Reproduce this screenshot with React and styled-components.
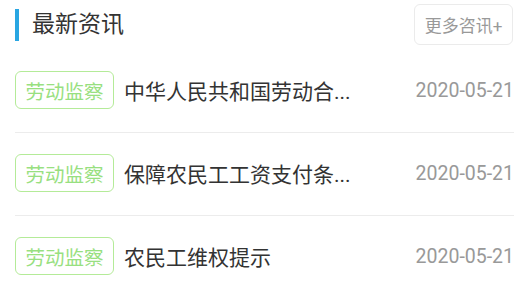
import React from 'react';
import styled, { createGlobalStyle } from 'styled-components';

const GlobalStyle = createGlobalStyle`
  body {
    margin: 0;
    background: #ffffff;
    font-family: Roboto, "Noto Sans CJK SC", sans-serif;
  }
`;

const Wrapper = styled.div`
  padding: 0 15px 0 15px;
  width: 529px;
  box-sizing: border-box;
`;

const Header = styled.div`
  display: flex;
  align-items: center;
  justify-content: space-between;
  height: 50px;
  padding-right: 1px;
`;

const Title = styled.h2`
  display: flex;
  align-items: center;
  margin: 0;
  font-size: 23px;
  font-weight: normal;
  color: #333;
  line-height: 32px;

  &::before {
    content: '';
    display: block;
    width: 4px;
    height: 32px;
    margin-right: 13px;
    background-color: #29a6e2;
  }
`;

const MoreButton = styled.button`
  height: 41px;
  width: 99px;
  margin-top: -1px;
  padding: 0;
  border: 1px solid #ebebeb;
  border-radius: 6px;
  background: #fff;
  color: #999;
  font-family: Roboto, "Noto Sans CJK SC", sans-serif;
  font-size: 17px;
`;

const List = styled.ul`
  list-style: none;
  margin: 0;
  padding: 0;
`;

const Row = styled.li`
  display: flex;
  align-items: center;
  height: 83px;
  box-sizing: border-box;
  border-bottom: 1px solid #ececec;
  padding-bottom: 2px;
`;

const Tag = styled.span`
  flex-shrink: 0;
  height: 38px;
  width: 99px;
  box-sizing: border-box;
  display: flex;
  align-items: center;
  justify-content: center;
  border: 1.5px solid #b4eb98;
  border-radius: 6px;
  color: #98e080;
  font-size: 19.5px;
`;

const NewsTitle = styled.span`
  margin-left: 10px;
  white-space: nowrap;
  color: #333;
  font-size: 21px;
`;

const Date = styled.span`
  margin-left: auto;
  color: #999;
  font-size: 19.5px;
`;

const news = [
  { tag: '劳动监察', title: '中华人民共和国劳动合...', date: '2020-05-21' },
  { tag: '劳动监察', title: '保障农民工工资支付条...', date: '2020-05-21' },
  { tag: '劳动监察', title: '农民工维权提示', date: '2020-05-21' },
];

export default function App() {
  return (
    <Wrapper>
      <GlobalStyle />
      <Header>
        <Title>最新资讯</Title>
        <MoreButton>更多咨讯+</MoreButton>
      </Header>
      <List>
        {news.map((item, i) => (
          <Row key={i}>
            <Tag>{item.tag}</Tag>
            <NewsTitle>{item.title}</NewsTitle>
            <Date>{item.date}</Date>
          </Row>
        ))}
      </List>
    </Wrapper>
  );
}
